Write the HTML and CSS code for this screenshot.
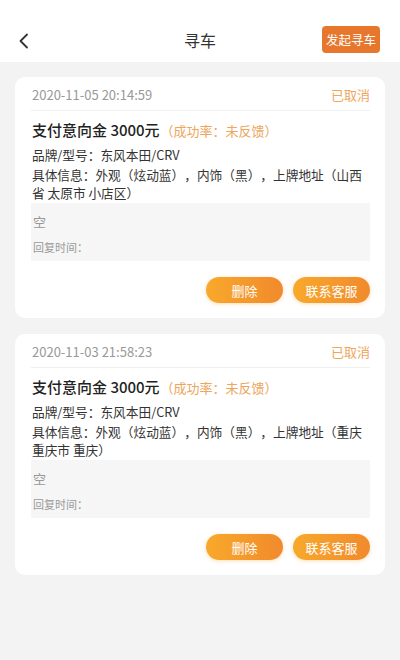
FILE: index.html
```html
<!DOCTYPE html>
<html lang="zh">
<head>
<meta charset="utf-8">
<title>寻车</title>
<link rel="stylesheet" href="styles.css">
</head>
<body>
<header class="topbar">
  <span class="back">
    <svg width="12" height="16" viewBox="0 0 12 16"><path d="M9 1.5 L2.5 8 L9 14.5" fill="none" stroke="#333" stroke-width="1.8" stroke-linecap="round" stroke-linejoin="round"/></svg>
  </span>
  <h1 class="title">寻车</h1>
  <button class="launch">发起寻车</button>
</header>
<main class="list">
  <section class="card">
    <div class="card-head">
      <span class="date">2020-11-05 20:14:59</span>
      <span class="status">已取消</span>
    </div>
    <div class="card-body">
      <p class="amount">支付意向金 3000元<span class="rate">（成功率：未反馈）</span></p>
      <p class="line brand">品牌/型号：东风本田/CRV</p>
      <p class="line info">具体信息：外观（炫动蓝），内饰（黑），上牌地址（山西省 太原市 小店区）</p>
      <div class="reply">
        <p class="reply-text">空</p>
        <p class="reply-time">回复时间：</p>
      </div>
      <div class="actions">
        <button class="pill">删除</button>
        <button class="pill">联系客服</button>
      </div>
    </div>
  </section>
  <section class="card">
    <div class="card-head">
      <span class="date">2020-11-03 21:58:23</span>
      <span class="status">已取消</span>
    </div>
    <div class="card-body">
      <p class="amount">支付意向金 3000元<span class="rate">（成功率：未反馈）</span></p>
      <p class="line brand">品牌/型号：东风本田/CRV</p>
      <p class="line info">具体信息：外观（炫动蓝），内饰（黑），上牌地址（重庆重庆市 重庆）</p>
      <div class="reply">
        <p class="reply-text">空</p>
        <p class="reply-time">回复时间：</p>
      </div>
      <div class="actions">
        <button class="pill">删除</button>
        <button class="pill">联系客服</button>
      </div>
    </div>
  </section>
</main>
</body>
</html>
```
FILE: styles.css
```css
* { box-sizing: border-box; }
html, body {
  margin: 0;
  padding: 0;
  background: #f3f3f3;
  font-family: "Noto Sans CJK SC", "Noto Sans", sans-serif;
  color: #333;
  height: 660px;
  overflow: hidden;
  text-spacing-trim: space-all;
}
p { margin: 0; }
.topbar {
  height: 62px;
  background: #fff;
  display: flex;
  align-items: center;
  justify-content: space-between;
  padding: 18px 20px 0 18px;
  position: relative;
}
.back {
  display: flex;
  width: 14px;
  height: 16px;
  margin-top: 2px;
}
.title {
  position: absolute;
  left: 0;
  right: 0;
  top: 18px;
  bottom: 0;
  margin: 0;
  display: flex;
  align-items: center;
  justify-content: center;
  font-size: 16px;
  font-weight: 400;
  color: #333;
  pointer-events: none;
}
.launch {
  position: relative;
  height: 27px;
  width: 58px;
  padding: 0;
  border: none;
  border-radius: 4px;
  background: #e8772e;
  color: #fff;
  font-family: inherit;
  font-size: 12.5px;
  line-height: 27px;
  margin-top: -2px;
}
.list {
  padding: 15px 15px;
  display: flex;
  flex-direction: column;
  gap: 16px;
}
.card {
  background: #fff;
  border-radius: 10px;
  padding: 0 15px 15px 16px;
}
.card-head {
  height: 34px;
  display: flex;
  align-items: center;
  justify-content: space-between;
  border-bottom: 1px solid #f0f0f0;
  padding-top: 1px;
}
.date {
  font-size: 13px;
  color: #999;
  padding-left: 1px;
}
.status {
  font-size: 13px;
  color: #eea55c;
}
.card-body {
  padding-top: 9px;
}
.amount {
  font-size: 15px;
  line-height: 20px;
  font-weight: 500;
  color: #222;
  padding-left: 1px;
}
.rate {
  font-size: 13px;
  font-weight: 400;
  color: #eea55c;
  margin-left: 1px;
}
.line {
  font-size: 12.7px;
  line-height: 18px;
  color: #333;
  padding-left: 1px;
}
.brand { margin-top: 5px; }
.info { margin-top: 2px; }
.reply {
  margin-top: 1px;
  background: #f6f6f6;
  padding: 9px 0 6px 2px;
}
.reply-text {
  font-size: 13px;
  line-height: 20px;
  color: #999;
}
.reply-time {
  margin-top: 7px;
  font-size: 11px;
  line-height: 16px;
  color: #999;
}
.actions {
  display: flex;
  justify-content: flex-end;
  gap: 10px;
  margin-top: 16px;
}
.pill {
  width: 77px;
  height: 26px;
  border: none;
  border-radius: 13px;
  background: linear-gradient(90deg, #f8a92b, #f18a2d);
  box-shadow: 0 1px 4px rgba(245, 160, 50, 0.35);
  color: #fff;
  font-family: inherit;
  font-size: 13px;
  padding: 0;
}
```
